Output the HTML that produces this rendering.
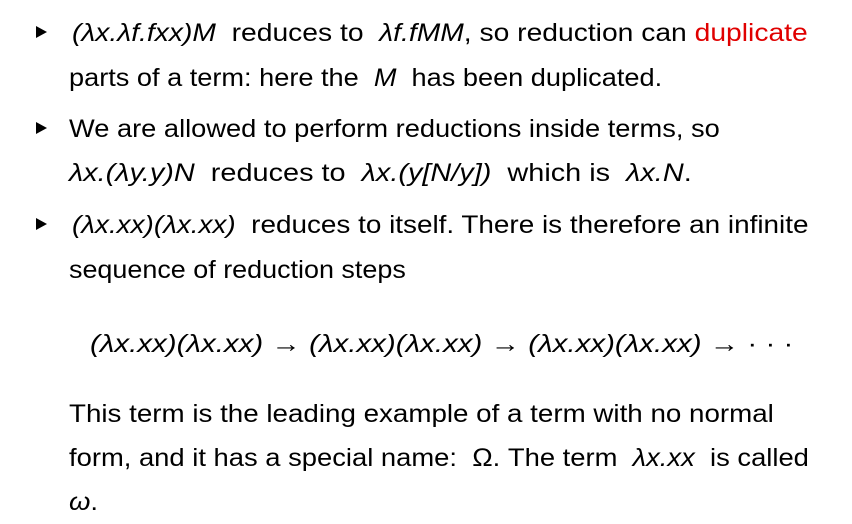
<!DOCTYPE html>
<html><head><meta charset="utf-8"><style>
body{margin:0;width:852px;height:524px;background:#fff;overflow:hidden;font-family:"Liberation Sans","DejaVu Sans",sans-serif;color:#000}
.l{position:absolute;white-space:nowrap;font-size:25px;line-height:1;transform-origin:0 50%}
i{font-style:italic}
.b{position:absolute;width:0;height:0;border-top:6px solid transparent;border-bottom:6px solid transparent;border-left:11px solid #000}
.r{color:#e00000}
</style></head><body>
<div class="b" style="left:36px;top:26px"></div>
<div class="l" style="left:72px;top:21px;transform:scaleX(1.13)"><i>(λx.λf.fxx)M</i>&nbsp; reduces to &nbsp;<i>λf.fMM</i>, so reduction can <span class="r">duplicate</span></div>
<div class="l" style="left:69px;top:66px;transform:scaleX(1.086)">parts of a term: here the &nbsp;<i>M</i>&nbsp; has been duplicated.</div>
<div class="b" style="left:36px;top:122px"></div>
<div class="l" style="left:69px;top:117px;transform:scaleX(1.09)">We are allowed to perform reductions inside terms, so</div>
<div class="l" style="left:69px;top:161px;transform:scaleX(1.155)"><i>λx.(λy.y)N</i>&nbsp; reduces to &nbsp;<i>λx.(y[N/y])</i>&nbsp; which is &nbsp;<i>λx.N</i>.</div>
<div class="b" style="left:36px;top:218px"></div>
<div class="l" style="left:72px;top:213px;transform:scaleX(1.115)"><i>(λx.xx)(λx.xx)</i>&nbsp; reduces to itself. There is therefore an infinite</div>
<div class="l" style="left:69px;top:258px;transform:scaleX(1.077)">sequence of reduction steps</div>
<div class="l" style="left:90px;top:332px;transform:scaleX(1.18)"><i>(λx.xx)(λx.xx)</i> → <i>(λx.xx)(λx.xx)</i> → <i>(λx.xx)(λx.xx)</i> → · · ·</div>
<div class="l" style="left:69px;top:402px;transform:scaleX(1.11)">This term is the leading example of a term with no normal</div>
<div class="l" style="left:69px;top:446px;transform:scaleX(1.095)">form, and it has a special name: &nbsp;Ω. The term &nbsp;<i>λx.xx</i>&nbsp; is called</div>
<div class="l" style="left:69px;top:490px;transform:scaleX(1.1)"><i>ω</i>.</div>
</body></html>
